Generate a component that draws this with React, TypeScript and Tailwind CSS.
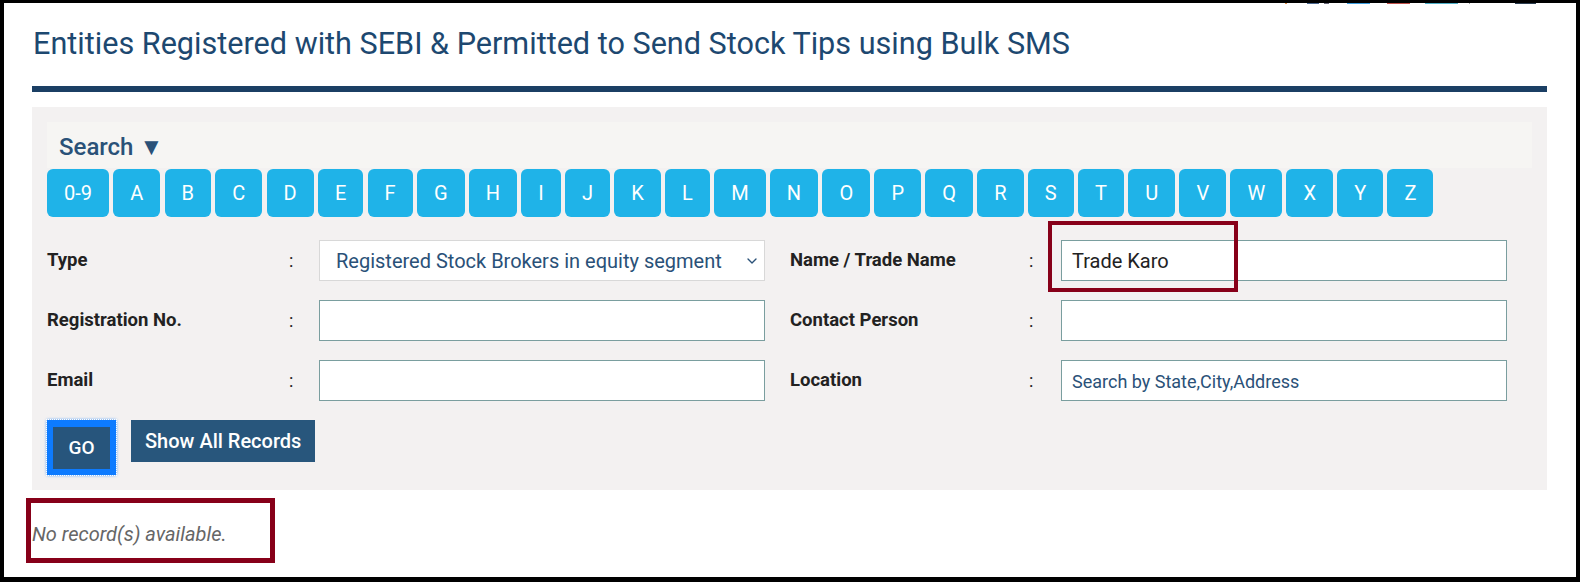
import { ChevronDown } from 'lucide-react';

const letters = ['0-9', 'A', 'B', 'C', 'D', 'E', 'F', 'G', 'H', 'I', 'J', 'K', 'L', 'M', 'N', 'O', 'P', 'Q', 'R', 'S', 'T', 'U', 'V', 'W', 'X', 'Y', 'Z'];

const Label = ({ text, right }: { text: string; right?: boolean }) => (
    <>
        <div className={`${right ? 'w-[239px]' : 'w-[242px]'} text-[18.5px] font-bold text-[#222]`}>{text}</div>
        <div className={`${right ? 'w-[32px]' : 'w-[30px]'} text-[18px] text-[#222]`}>:</div>
    </>
);

const TextBox = ({ value, placeholder }: { value?: string; placeholder?: string }) => (
    <input
        defaultValue={value}
        placeholder={placeholder}
        className="w-[446px] h-[41px] bg-white border border-[#7a9e9f] px-[10px] text-[20px] text-[#222] placeholder:text-[18px] placeholder:text-[#2a5178] outline-none"
    />
);

const App = () => {
    return (
        <div className="w-[1580px] h-[582px] bg-black pt-[3px] pl-[4px] pr-[4px] pb-[5px] font-['Roboto',sans-serif]">
            <div className="relative h-full bg-white pl-[28px] pr-[29px] pt-[23px]">
                {/* cut off share icons at top edge */}
                <div className="absolute top-0 left-[1281px] flex h-px items-start">
                    <span className="w-[2px] h-px bg-[#e0904a]" />
                    <span className="ml-[20px] w-[12px] h-px bg-[#4a6890]" />
                    <span className="ml-[5px] w-[5px] h-px bg-[#667]" />
                    <span className="ml-[18px] w-[23px] h-px bg-[#3d9fe0]" />
                    <span className="ml-[17px] w-[23px] h-px bg-[#c0504a]" />
                    <span className="ml-[15px] w-[33px] h-px bg-[#4fb0c8]" />
                    <span className="ml-[11px] w-px h-px bg-[#999]" />
                    <span className="ml-[45px] w-[21px] h-px bg-[#2c3e50]" />
                </div>

                <h1 className="text-[30.6px] leading-[36px] text-[#1d4870] pl-[1px]">Entities Registered with SEBI &amp; Permitted to Send Stock Tips using Bulk SMS</h1>
                <div className="mt-[24px] h-[6px] bg-[#1b3f64]" />

                <div className="mt-[15px] bg-[#f3f1f1] p-[15px]">
                    <div className="h-[46px] bg-[#f6f5f3] pl-[12px] pt-[4px] flex items-center">
                        <span className="text-[24px] font-medium text-[#2a5178]">Search ▼</span>
                    </div>
                    <div className="flex gap-[4.25px] mt-px">
                        {letters.map(l => (
                            <button key={l} className="h-[48px] px-[17px] rounded-[6px] bg-[#1fb3e8] text-white text-[20px]">{l}</button>
                        ))}
                    </div>

                    <div className="mt-[23px] flex flex-col gap-[19px]">
                        <div className="flex items-center">
                            <Label text="Type" />
                            <div className="relative w-[446px] h-[41px] bg-white border border-[#d8d8d8] flex items-center pl-[16px] text-[20px] text-[#2a5178]">
                                Registered Stock Brokers in equity segment
                                <ChevronDown size={16} strokeWidth={2} className="absolute right-[4px] text-[#2a5178]" />
                            </div>
                            <div className="w-[25px]" />
                            <Label text="Name / Trade Name" right />
                            <TextBox value="Trade Karo" />
                        </div>
                        <div className="flex items-center">
                            <Label text="Registration No." />
                            <TextBox />
                            <div className="w-[25px]" />
                            <Label text="Contact Person" right />
                            <TextBox />
                        </div>
                        <div className="flex items-center">
                            <Label text="Email" />
                            <TextBox />
                            <div className="w-[25px]" />
                            <Label text="Location" right />
                            <TextBox placeholder="Search by State,City,Address" />
                        </div>
                    </div>

                    <div className="mt-[19px] flex items-start">
                        <div className="border-[6px] border-t-[7px] border-[#0d7bff] outline outline-1 outline-dotted outline-white shadow-[0_0_3px_#0d7bff]">
                            <button className="w-[57px] h-[42px] bg-[#27557c] text-white text-[19px] font-medium">GO</button>
                        </div>
                        <button className="ml-[15px] h-[42px] px-[14px] bg-[#28567c] text-white text-[20px] font-medium">Show All Records</button>
                    </div>
                </div>

                <p className="mt-[31px] text-[20px] leading-[27px] italic text-[#666]">No record(s) available.</p>

                {/* annotation boxes */}
                <div className="absolute left-[1044px] top-[218px] w-[190px] h-[71px] border-[4px] border-[#870019]" />
                <div className="absolute left-[22px] top-[495px] w-[249px] h-[65px] border-[5px] border-[#870019]" />
            </div>
        </div>
    );
};

export default App;
